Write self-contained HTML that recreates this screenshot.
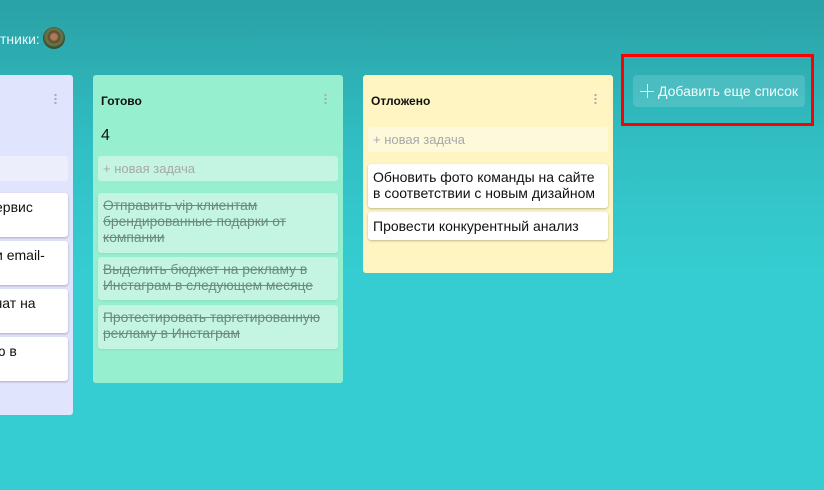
<!DOCTYPE html>
<html><head><meta charset="utf-8"><style>
*{box-sizing:border-box;margin:0;padding:0}
body{width:824px;height:490px;overflow:hidden;position:relative;font-family:"Liberation Sans",sans-serif;background:linear-gradient(180deg,#2aa1a6 0%,#31bfc3 30%,#35cdd1 55%,#35cdd1 100%)}
.abs{position:absolute}
.col{position:absolute;border-radius:3px}
.dots{position:absolute;width:3px;height:11px;background:radial-gradient(circle,#aaa 1px,transparent 1.3px) 0 0/3px 4px repeat-y}
.card{position:absolute;background:#fff;border-radius:3px;box-shadow:0 1px 2px rgba(0,0,0,.25);font-size:14px;line-height:16px;color:#111;padding:6px 5px}
.new{position:absolute;border-radius:3px;font-size:13px;color:#a8a8a8;padding:5px 5px;line-height:15px}
.title{position:absolute;font-weight:bold;font-size:12px;color:#111}
.done{position:absolute;background:#c3f5e2;border-radius:3px;box-shadow:0 1px 2px rgba(0,0,0,.08);font-size:13.8px;line-height:16px;color:#6d8a80;text-decoration:line-through;padding:5px 5px}
</style></head><body>
<div class="abs" style="left:0;top:31px;font-size:14px;color:#e8fafa">тники:</div>
<div class="abs" style="left:43px;top:27px;width:22px;height:22px;border-radius:50%;background:radial-gradient(circle at 50% 45%,#b07a5a 0 3px,#5a4a30 5px,#6a7a4a 8px,#3a4a30 11px)"></div>

<div class="col" style="left:-10px;top:75px;width:83px;height:340px;background:#e0e4fc"></div>
<div class="dots" style="left:54px;top:93px"></div>
<div class="new" style="left:-10px;top:156px;width:78px;height:25px;background:#eceefc"></div>
<div class="card" style="left:-10px;top:193px;width:78px;height:44px">ервис</div>
<div class="card" style="left:-10px;top:241px;width:78px;height:44px">и email-</div>
<div class="card" style="left:-10px;top:289px;width:78px;height:44px">чат на</div>
<div class="card" style="left:-10px;top:337px;width:78px;height:44px">ю в</div>

<div class="col" style="left:93px;top:75px;width:250px;height:308px;background:#96f0d0"></div>
<div class="title" style="left:101px;top:94px">Готово</div>
<div class="dots" style="left:324px;top:93px"></div>
<div class="abs" style="left:101px;top:127px;font-size:16px;color:#111">4</div>
<div class="new" style="left:98px;top:156px;width:240px;height:25px;background:#c4f5e3">+ новая задача</div>
<div class="done" style="left:98px;top:193px;width:240px;height:60px">Отправить vip клиентам брендированные подарки от компании</div>
<div class="done" style="left:98px;top:257px;width:240px;height:43px">Выделить бюджет на рекламу в Инстаграм в следующем месяце</div>
<div class="done" style="left:98px;top:305px;width:240px;height:44px">Протестировать таргетированную рекламу в Инстаграм</div>

<div class="col" style="left:363px;top:75px;width:250px;height:198px;background:#fff5c2"></div>
<div class="title" style="left:371px;top:94px">Отложено</div>
<div class="dots" style="left:594px;top:93px"></div>
<div class="new" style="left:368px;top:127px;width:240px;height:25px;background:#fff9dc">+ новая задача</div>
<div class="card" style="left:368px;top:164px;width:240px;height:44px;padding:5px 5px">Обновить фото команды на сайте в соответствии с новым дизайном</div>
<div class="card" style="left:368px;top:212px;width:240px;height:28px">Провести конкурентный анализ</div>

<div class="abs" style="left:633px;top:75px;width:172px;height:32px;border-radius:4px;background:rgba(255,255,255,.14)"></div>
<div class="abs" style="left:640px;top:84px;width:14px;height:14px">
<div class="abs" style="left:6.5px;top:0;width:1px;height:14px;background:#d8f4f4"></div>
<div class="abs" style="left:0;top:6.5px;width:14px;height:1px;background:#d8f4f4"></div></div>
<div class="abs" style="left:658px;top:83px;font-size:14px;color:#f2fcfc">Добавить еще список</div>
<div class="abs" style="left:621px;top:54px;width:193px;height:72px;border:3px solid #f00"></div>
</body></html>
